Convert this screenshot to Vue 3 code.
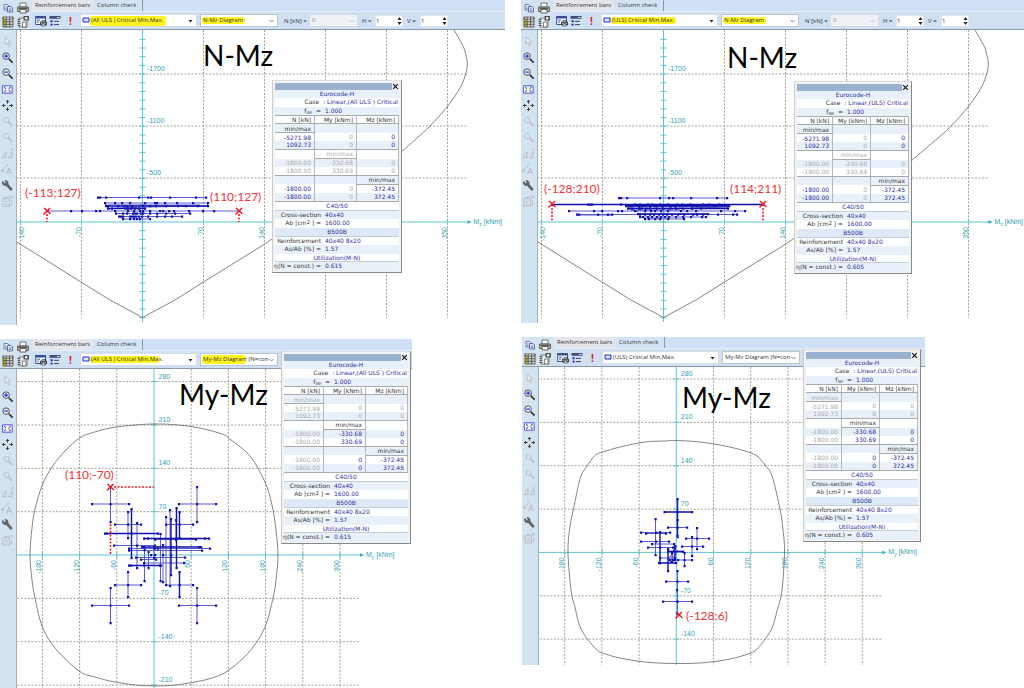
<script setup>
import { reactive } from 'vue'

const railIcons = [
  { id: 'cursor', label: 'Select', dim: true },
  { id: 'zoomin', label: 'Zoom in' },
  { id: 'zoomout', label: 'Zoom out' },
  { id: 'fit', label: 'Fit view' },
  { id: 'pan', label: 'Pan' },
  { id: 'undo', label: 'Previous view', dim: true },
  { id: 'redo', label: 'Next view', dim: true },
  { id: 'mirror', label: 'Mirror', dim: true },
  { id: 'label', label: 'Label', dim: true },
  { id: 'wrench', label: 'Settings' },
  { id: 'export', label: 'Export', dim: true },
]

const range = (from, step, n) => Array.from({ length: n }, (_, i) => Math.round((from + i * step) * 10) / 10)

const nmGrid = (x0) => ({
  x: x0, y: 222,
  gx: range(x0 - 122, 61, 8), gy: [74, 126, 178],
  gridRight: x0 + 325, gridBottom: 318, axisBottom: 322,
  yTicks: range(39.3, 8.7, 33).filter((v) => v < 320),
  yLabels: [[-1700, 74], [-1100, 126], [-500, 178]],
  xLabels: [-140, -70, null, 70, 140, 210, 280, 350],
  unit: 'z',
})

const mmGrid = (x0, y0, bottom) => ({
  x: x0, y: y0,
  gx: range(x0 - 111.6, 37.2, 9), gy: range(y0 - 173.4, 43.35, 8).filter((v) => v !== y0 && v < bottom),
  gridRight: x0 + 206, gridBottom: bottom, axisBottom: bottom,
  yTicks: range(y0 - 173.4, 43.35, 8).filter((v) => v < bottom),
  yLabels: [280, 210, 140, 70, null, -70, -140, -210].map((t, i) => [t, y0 - 173.4 + i * 43.35]).filter((l) => l[0] !== null && l[1] < bottom),
  xLabels: [-180, -120, -60, null, 60, 120, 180, 240, 300],
  unit: 'y',
})

const panels = reactive([
  {
    id: 'a', side: 'left', kind: 'N-Mz', caseName: '(All ULS ) Critical Min,Max.', short: 'Linear,(All ULS ) Critical',
    diagram: 'N-Mz Diagram', eta: '0.615', view: '17 30 488 295', grid: nmGrid(142.5),
    title: [203, 66], notes: [['(-113;127)', 25, 197], ['(110;127)', 210, 201]],
    straight: ['M17 242L81 282L110 300L142.5 317.5L175 300L203.5 282L260 247L290 227'],
    smooth: [[454, 30], [463.5, 47], [466, 56], [467.3, 63], [466, 73], [460, 88], [447, 107], [430, 126], [417, 138], [401, 152], [380, 169]],
    marks: [[47, 211], [239, 211]], dashes: ['M47 214V222', 'M239 214V222'],
    h: [[98, 197.5, 206], [105, 203, 208], [106, 206, 208, 1], [108, 208.5, 145, 1], [47, 211, 239], [116, 213.5, 190], [119, 216.5, 182], [123, 219, 150]],
    v: [],
    shape: 'M105 203L108 208.5L145 207L207 206L208 203M108 205H200M119 216L123 219',
    dots: [[197.5, [100, 106, 139, 148, 151, 170, 196]], [203, [115, 122, 130, 145, 155, 157, 165, 177, 193]], [206, [108, 118, 124, 127, 132, 143, 150, 156, 166, 178, 186, 198]], [208.5, [112, 126, 128, 131, 135, 139]], [211, [71, 82, 96, 100, 115, 128, 134, 140, 143, 150, 160, 163, 169, 174, 189, 203, 214]], [213.5, [123, 127, 133, 135, 137, 141, 143, 150, 157, 166, 175]], [216.5, [121, 123, 130, 132, 134, 136, 139, 142, 148, 157, 165, 172]], [219, [130, 134, 137, 140]]],
    marker: 'a',
  },
  {
    id: 'c', side: 'left', kind: 'My-Mz', caseName: '(All ULS ) Critical Min,Max.', short: 'Linear,(All ULS ) Critical',
    diagram: 'My-Mz Diagram (N=con', eta: '0.615', view: '17 369 395 319', grid: mmGrid(154, 555, 690),
    title: [179, 405], notes: [['(110;-70)', 65, 479]],
    straight: [], closed: true,
    smooth: [[30, 555], [32, 528], [35, 509], [42.3, 485], [52, 467], [65, 451], [79.5, 438], [90, 433.5], [110, 428], [135, 425], [154, 424], [172, 424.5], [197, 427.5], [222, 434], [231, 440], [250, 456], [265, 482], [272, 505], [276, 530], [278, 555], [276, 580], [273, 598], [265, 627], [250, 651], [229, 670], [215, 677], [195, 682], [170, 685.5], [142, 685.5], [115, 682], [95, 677], [79, 671], [55, 648], [42, 626], [35, 598], [32, 580]],
    marks: [[110.5, 487]], dashes: ['M114 487H154', 'M110.5 524V555'],
    h: [[92, 504, 129], [179, 504, 216], [115, 524.5, 141], [166, 524.5, 193], [105, 533.5, 158, 1], [144, 538.5, 209, 1], [155, 539.5, 196], [114, 545.5, 155], [142, 547, 201, 1], [155, 548.5, 210], [129, 548.5, 158], [129, 550.5, 202], [136, 557.5, 185], [141, 559.5, 156], [144, 563, 184], [129, 565.5, 161, 1], [115, 585, 141], [166, 585, 193], [92, 605.5, 129], [179, 605.5, 216]],
    v: [[110.5, 487, 522], [197, 487, 522], [128, 512, 538], [179.5, 512, 538, 1], [131.5, 509, 558, 1], [137, 523, 568], [144.5, 550, 581], [148.5, 552, 568], [154, 548, 558], [160.5, 534, 581], [163, 545, 582], [166, 517, 585], [170, 510, 586], [171, 519, 575, 1], [176.5, 508, 568, 1], [176, 520, 540], [128, 572, 597], [179.5, 572, 597, 1], [110.5, 588, 623], [197, 588, 623]],
    shape: '',
    dots: [[504, [110.5, 197]], [524.5, [128, 179.5]], [533.5, [107, 131.5]], [538.5, [148, 176, 205]], [545.5, [137]], [547, [144, 171, 199]], [555, [151, 155, 163, 171]], [565.5, [131, 144, 160]], [585, [128, 179.5]], [605.5, [110.5, 197]]],
    marker: 'c',
  },
  {
    id: 'b', side: 'right', kind: 'N-Mz', caseName: '(ULS) Critical Min,Max.', short: 'Linear,(ULS) Critical',
    diagram: 'N-Mz Diagram', eta: '0.605', view: '538 30 486 293', grid: nmGrid(663.5),
    title: [727, 68], notes: [['(-128;210)', 544, 193], ['(114;211)', 730, 193]],
    straight: ['M538 242L602 282L631 300L663.5 317.5L696 300L724.5 282L781 247L811 227'],
    smooth: [[975, 30], [984.5, 47], [987, 56], [988.3, 63], [987, 73], [981, 88], [968, 107], [951, 126], [938, 138], [911, 161], [900, 170]],
    marks: [[552, 204], [763, 204]], dashes: ['M552 208V222', 'M763 208V222'],
    h: [[619, 198, 727], [552, 204.5, 763, 1], [626, 206, 729, 1], [628, 208.5, 728, 1], [569, 211, 745], [577, 214.5, 737], [638, 214, 708, 1], [640, 217, 706], [645, 219, 684]],
    v: [],
    shape: 'M626 204L629 208.5L638 212M729 204L727 208L690 207M578 215H612M629 206.8H727M631 210L680 210',
    dots: [[198, [621, 627, 660, 669, 673, 691, 717]], [204.5, [588, 590, 592, 621, 635, 640, 648, 652, 660, 668, 677, 682, 690, 703, 709, 719]], [206, [630, 639, 643, 650, 655, 662, 671, 675, 680, 686, 697, 715]], [208.5, [632, 639, 641, 646, 650, 657, 663, 670, 676, 683, 692, 701]], [211, [594, 602, 618, 622, 635, 645, 651, 655, 661, 668, 681, 687, 696, 721, 735]], [214.5, [579, 598, 608, 612, 640, 645, 650, 654, 659, 663, 667, 672, 678, 684, 693, 697, 703, 718, 733]], [217, [643, 648, 652, 657, 661, 665, 669, 676, 683, 691, 702]], [219, [649, 655, 660, 668]]],
    marker: 'b',
  },
  {
    id: 'd', side: 'right', kind: 'My-Mz', caseName: '(ULS) Critical Min,Max.', short: 'Linear,(ULS) Critical',
    diagram: 'My-Mz Diagram (N=con', eta: '0.605', view: '539 367 386 298', grid: mmGrid(676.3, 552.4, 665),
    title: [682, 408], notes: [['(-128;6)', 686, 620]],
    straight: [], closed: true,
    smooth: [[568, 552], [570, 526], [573.5, 509], [577, 492], [581, 476], [587, 466], [595, 455.5], [603, 452], [620, 447], [645, 442], [665, 441], [676, 440.5], [700, 442], [725, 446], [745, 451], [757, 456], [765, 465], [772, 476], [780, 509], [783, 530], [784.5, 552], [782, 590], [777, 611], [771, 630], [757, 649], [745, 655], [725, 660], [700, 663], [676, 663.5], [650, 662.5], [625, 659], [607, 654.5], [596, 649], [581, 629], [575, 607], [571, 590]],
    marks: [[679, 615]], dashes: [],
    h: [[664.5, 512, 692, 1], [668, 527.5, 687], [641, 532.5, 670], [646, 533.5, 666], [641, 541.5, 669], [652, 544, 674], [648, 547.5, 673], [686, 538.5, 709], [682, 546.5, 703], [668, 551.5, 683, 1], [678, 560, 692], [660, 558, 675], [659, 563, 676, 1], [666, 581.5, 688], [663, 601.5, 692]],
    v: [[677.5, 499, 536, 1], [655.5, 519, 555], [660, 532, 563, 1], [697, 528, 549], [692, 537, 556], [684.5, 553, 566], [668, 549, 571, 1], [672, 553, 562], [675, 546, 560, 1], [677.5, 571, 614], [677.5, 520, 537]],
    shape: 'M668 560L677 546M670 562L678 550M672 557L674 548',
    dots: [[512, [677.5]], [527.5, [677.5]], [532.5, [656]], [541.5, [656]], [547.5, [660]], [538.5, [697]], [546.5, [692]], [560, [684.5, 670, 673]], [581.5, [677.5]], [590, [677]], [601.5, [677.5]]],
    marker: '',
  },
])

const columns = [panels.filter((p) => p.side === 'left'), panels.filter((p) => p.side === 'right')]

// Catmull-Rom spline through the envelope points.
const spline = (pts, closed) => {
  const n = pts.length
  const at = (i) => (closed ? pts[(i + n) % n] : pts[Math.min(Math.max(i, 0), n - 1)])
  let d = `M${pts[0]}`
  for (let i = 0; i < (closed ? n : n - 1); i++) {
    const [a, b, c, e] = [at(i - 1), at(i), at(i + 1), at(i + 2)]
    d += `C${b[0] + (c[0] - a[0]) / 6} ${b[1] + (c[1] - a[1]) / 6} ${c[0] - (e[0] - b[0]) / 6} ${c[1] - (e[1] - b[1]) / 6} ${c[0]} ${c[1]}`
  }
  return d
}

const square = (x, y) => `M${x - 1} ${y - 1}h2.2v2.2h-2.2z`
const dotPath = (p) =>
  p.h.map((l) => square(l[0], l[1]) + square(l[2], l[1])).join('') +
  p.v.map((l) => square(l[0], l[1]) + square(l[0], l[2])).join('') +
  p.dots.map(([y, xs]) => xs.map((x) => square(x, y)).join('')).join('')
const linePath = (p, thick) =>
  p.h.filter((l) => !!l[3] === thick).map((l) => `M${l[0]} ${l[1]}H${l[2]}`).join('') +
  p.v.filter((l) => !!l[3] === thick).map((l) => `M${l[0]} ${l[1]}V${l[2]}`).join('')
const gridPath = (g, top) =>
  g.gx.filter((x) => Math.abs(x - g.x) > 1).map((x) => `M${x} ${top}V${g.gridBottom}`).join('') +
  g.gy.map((y) => `M${g.x - 140} ${y}H${g.gridRight}`).join('')
const tickPath = (g) =>
  g.yTicks.map((y) => `M${g.x - 3} ${y}h6`).join('') + g.gx.map((x) => `M${x} ${g.y - 3}v6`).join('')
const leftOf = (p) => Number(p.view.split(' ')[0])
const topOf = (p) => Number(p.view.split(' ')[1])

// Each row: [N, My, Mz] with a flag per cell telling whether it is greyed out.
const resultRows = (kind) => {
  const n = kind === 'N-Mz'
  return [
    { head: 0, cells: [['min/max', !n], ['', 0], ['', 0]] },
    { cells: [['-5271.98', !n], ['0', 1], ['0', !n]] },
    { end: true, cells: [['1092.73', !n], ['0', 1], ['0', !n]] },
    { head: 1, cells: [['', 0], ['min/max', n], ['', 0]] },
    { cells: [['-1800.00', 1], ['-330.68', n], ['0', n]] },
    { end: true, cells: [['-1800.00', 1], ['330.69', n], ['0', n]] },
    { head: 2, cells: [['', 0], ['', 0], ['min/max', 0]] },
    { cells: [['-1800.00', !n], ['0', n], ['-372.45', 0]] },
    { end: true, cells: [['-1800.00', !n], ['0', n], ['372.45', 0]] },
  ]
}
</script>

<template>
  <main class="board">
    <div v-for="(col, ci) in columns" :key="ci" class="column">
      <section v-for="p in col" :key="p.id" class="panel" :class="'panel-' + p.id">
        <header class="head">
          <div class="file-tools">
            <button class="tool" aria-label="Copy">
              <svg viewBox="0 0 12 12"><path d="M2 2.500h3.500l1.500 1.500v4h-5z" fill="#eef" stroke="#5568a0" stroke-width=".8" /><path d="M5.500 4.500h3.500l1.500 1.500v4h-5z" fill="#dde4fa" stroke="#445590" stroke-width=".8" /><path d="M7 7h2M7 8.500h2M3 5h1.500M3 6.500h1.500" stroke="#445590" stroke-width=".7" /></svg>
            </button>
            <button class="tool" aria-label="Print">
              <svg viewBox="0 0 12 12"><path d="M3 1h6v4H3z" fill="#fff" stroke="#555" stroke-width=".8" /><path d="M.6 5h10.800v4.500H.6z" fill="#b9b7a0" stroke="#444" stroke-width=".8" /><path d="M3 7.500h6V11H3z" fill="#f7f7f0" stroke="#444" stroke-width=".8" /><path d="M1.500 6.300h9" stroke="#444" /></svg>
            </button>
            <button class="tool" aria-label="Table">
              <svg viewBox="0 0 12 12"><path d="M1 1h10v10H1z" fill="#fff" /><path d="M1 3h3v8H1z" fill="#e8e22c" /><path d="M1 1h10v2H1zM1 1v10h10V1M1 5.700h10M1 8.300h10M4.200 1v10M7.600 1v10" fill="#333" fill-opacity=".2" stroke="#444" stroke-width=".8" /></svg>
            </button>
            <button class="tool" aria-label="Snapshot">
              <svg viewBox="0 0 12 12"><path d="M2 2h8v9H2z" fill="#e8ecf0" stroke="#666" stroke-width=".8" /><path d="M.5 3.500h3M.5 5.500h3M.5 7.500h3M.5 9.500h3" stroke="#444" stroke-width=".8" /><path d="M6.500 0h5.500v4.500h-5.500z" fill="#555" /><circle cx="9.200" cy="2.300" r="1.200" fill="#fff" /><path d="M5.500 6h3.500v5h-3.500z" fill="#fff" stroke="#666" stroke-width=".8" /></svg>
            </button>
          </div>
          <div class="ribbon">
            <nav class="tabs">
              <button class="tab">Reinforcement bars</button>
              <button class="tab current">Column check</button>
            </nav>
            <div class="toolbar">
              <button class="tool" aria-label="Print table">
                <svg viewBox="0 0 12 12"><path d="M.7 1.500h9.800v8H.7z" fill="#f6f8ff" stroke="#2c3f86" stroke-width=".9" /><path d="M.5 1h10.200v2.500H.5z" fill="#3a4f96" /><path d="M2 5.200h3M2 7.200h2" stroke="#2c3f86" stroke-width=".8" /><path d="M5.500 7h6v3h-6z" fill="#999" stroke="#222" stroke-width=".8" /><path d="M7 5.500h3V7H7zM7 9h3v2H7z" fill="#fff" stroke="#222" stroke-width=".6" /></svg>
              </button>
              <button class="tool" aria-label="Display options">
                <svg viewBox="0 0 12 12"><path d="M.5 1h11v2.800H.5z" fill="#444e78" /><path d="M8 2.500h2.500" stroke="#fff" stroke-width=".8" /><path d="M1.500 5.300h2.200v1.900H1.500zM1.500 8.700h2.200v1.900H1.500z" fill="#2525cc" /><path d="M5 6.300h5M5 9.600h5" stroke="#444" /></svg>
              </button>
              <button class="alert" aria-label="Warnings">!</button>
              <div class="pick pick-case">
                <span v-if="p.marker" class="marker" :class="'marker-' + p.marker"></span>
                <svg class="case-icon" viewBox="0 0 8 6"><path d="M1 1h6v4H1z" fill="#dfe4ff" stroke="#1c28d8" stroke-width="1" /></svg>
                <select aria-label="Load case"><option>{{ p.caseName }}</option></select>
                <svg class="arrow" viewBox="0 0 5 4"><path d="M.5 1h4L2.500 3.500z" fill="#222" /></svg>
              </div>
              <div class="pick pick-diagram">
                <span v-if="p.marker" class="marker" :class="'marker-dia-' + p.marker"></span>
                <select aria-label="Diagram"><option>{{ p.diagram }}</option></select>
                <svg class="arrow" viewBox="0 0 5 4"><path d="M.5 1L2.500 3L4.500 1" fill="none" stroke="#666" stroke-width=".8" /></svg>
              </div>
              <template v-if="p.kind === 'N-Mz'">
                <label class="field label-n" :for="'n-' + p.id">N [kN] =</label>
                <div class="pick pick-n">
                  <select :id="'n-' + p.id" disabled><option>0</option></select>
                  <svg class="arrow" viewBox="0 0 5 4"><path d="M.5 1L2.500 3L4.500 1" fill="none" stroke="#bbb" stroke-width=".8" /></svg>
                </div>
                <template v-for="k in ['H', 'V']" :key="k">
                  <label class="field" :for="k + p.id">{{ k }} =</label>
                  <div class="spin">
                    <input :id="k + p.id" type="number" value="1" />
                    <svg viewBox="0 0 5 10"><path d="M.5 4h4L2.500 1zM.5 6h4L2.500 9z" fill="#222" /></svg>
                  </div>
                </template>
              </template>
            </div>
          </div>
        </header>

        <div class="body">
          <aside class="rail">
            <button v-for="ic in railIcons" :key="ic.id" class="rail-btn" :class="{ dim: ic.dim }" :aria-label="ic.label">
              <svg viewBox="0 0 14 14" fill="none" stroke="currentColor">
                <path v-if="ic.id === 'cursor'" d="M4.500 2v8l2-1.700 1.500 3.400 1.400-.7-1.500-3.200H10z" fill="#e8eef4" stroke-width=".9" />
                <template v-else-if="ic.id === 'zoomin' || ic.id === 'zoomout'">
                  <circle cx="5.500" cy="5.500" r="3.500" stroke-width=".9" fill="#eaf0ff" />
                  <path d="M8.500 8.500L12.500 12.500" stroke-width="1.800" />
                  <path :d="ic.id === 'zoomin' ? 'M3.500 5.500h4M5.500 3.500v4' : 'M3.500 5.500h4'" stroke="#2222dd" stroke-width="1.200" />
                </template>
                <template v-else-if="ic.id === 'fit'">
                  <path d="M1.500 3h10.500v8h-10.500z" stroke="#4650e8" stroke-width="1" fill="#f4f6ff" />
                  <path d="M3.500 5l2 1.500M3.500 9l2-1.500M10 5l-2 1.500M10 9l-2-1.500M3.300 4.600h1.500M8.800 4.600h1.500M3.300 9.500h1.500M8.800 9.500h1.500" stroke-width=".8" />
                </template>
                <path v-else-if="ic.id === 'pan'" d="M7 1.500v3.500M7 9v3.500M1.500 7H5M9 7h3.500M5.500 3.200L7 1.500l1.500 1.700M5.500 10.800L7 12.500l1.500-1.700M3.200 5.500L1.500 7l1.700 1.500M10.800 5.500L12.500 7l-1.700 1.500" stroke-width="1" />
                <template v-else-if="ic.id === 'undo' || ic.id === 'redo'">
                  <circle cx="6" cy="5.500" r="2.800" stroke-width=".9" />
                  <path d="M8.300 7.800L12 11.500" stroke-width="1.500" />
                  <path v-if="ic.id === 'redo'" d="M8 4h3" stroke="#d3e3ef" stroke-width="1.500" />
                </template>
                <path v-else-if="ic.id === 'mirror'" d="M1.500 11.500h4V5zM8 11.500h4V5zM11 3.500l1.500-1.500M12.500 1v2.500" stroke-width=".9" />
                <path v-else-if="ic.id === 'label'" d="M1 8.500L8 1M1 6.500v2.500h2.500M6 12L8.700 5.500L11.500 12M7 10h3.500" stroke-width="1" />
                <path v-else-if="ic.id === 'wrench'" d="M2 2.500a3 3 0 0 0 3.500 4.500L10.500 12.500l1.700-1.500L7.500 5.500A3 3 0 0 0 4.500 1.500l1 2.500-1.500 1z" fill="#666" stroke="#444" stroke-width=".6" />
                <path v-else d="M2 4h7v8H2zM4.500 4V2.500h4M11.500 6v4.500H9M4 7h3M4 9.500h3M9 4.500l3-3M10 1.500h2v2" stroke-width=".9" />
              </svg>
            </button>
          </aside>
          <svg class="plot" :viewBox="p.view">
            <path :d="gridPath(p.grid, topOf(p))" class="grid" />
            <path :d="`M${p.grid.x} ${topOf(p)}V${p.grid.axisBottom}M${p.grid.x - 140} ${p.grid.y}H${p.grid.gridRight + 3}`" class="axis" />
            <path :d="`M${p.grid.gridRight + 4} ${p.grid.y}l-4 -2v4z`" class="tip" />
            <path :d="tickPath(p.grid)" class="axis" />
            <text v-for="l in p.grid.yLabels" :key="'y' + l[0]" :x="p.grid.x + 4.500" :y="l[1] - 3" class="num">{{ l[0] }}</text>
            <template v-for="(l, i) in p.grid.xLabels" :key="'x' + i">
              <text v-if="l !== null" :transform="`translate(${Math.max(p.grid.gx[i] - 1, leftOf(p) + 7)} ${p.grid.y + 5}) rotate(-90)`" class="num turned">{{ l }}</text>
            </template>
            <text :x="p.grid.gridRight + 6" :y="p.grid.y + 2" class="num">M<tspan dy="2" class="sub">{{ p.grid.unit }}</tspan><tspan dy="-2"> [kNm]</tspan></text>
            <path v-for="(c, i) in p.straight" :key="'c' + i" :d="c" class="hull" />
            <path :d="spline(p.smooth, p.closed)" class="hull" />
            <path :d="linePath(p, false) + p.shape" class="line" />
            <path :d="linePath(p, true)" class="line thick" />
            <path :d="dotPath(p)" class="dots" />
            <path v-for="d in p.dashes" :key="d" :d="d" class="dash" />
            <path v-for="(m, i) in p.marks" :key="'m' + i" :d="`M${m[0] - 3} ${m[1] - 3}l6.500 6M${m[0] + 3} ${m[1] - 3}l-6.500 6.500`" class="cross" />
            <text v-for="n in p.notes" :key="n[0]" :x="n[1]" :y="n[2]" class="note">{{ n[0] }}</text>
            <text :x="p.title[0]" :y="p.title[1]" class="title">{{ p.kind }}</text>
          </svg>
        </div>

        <article class="results" :class="'results-' + p.id">
          <div class="caption"><button class="close" aria-label="Close"><svg viewBox="0 0 6 6"><path d="M1 1l4 4M5 1L1 5" stroke="#111" stroke-width="1" /></svg></button></div>
          <div class="info first">
            <div class="line-row mid">Eurocode-H</div>
            <div class="line-row case"><span>Case</span><span class="val">: {{ p.short }}</span></div>
            <div class="line-row"><span class="key">f<sub>se</sub>&nbsp; =</span><span class="val">1.000</span></div>
          </div>
          <table class="values">
            <thead><tr><th>N [kN]</th><th>My [kNm]</th><th>Mz [kNm]</th></tr></thead>
            <tbody>
              <tr v-for="(r, ri) in resultRows(p.kind)" :key="ri" :class="{ end: r.end }">
                <td v-for="(c, i) in r.cells" :key="i" :class="{ faint: c[1], caps: r.head === i }">{{ c[0] }}</td>
              </tr>
            </tbody>
          </table>
          <div class="info second">
            <div class="line-row mid">C40/50</div>
            <div class="line-row"><span class="key">Cross-section</span><span class="val">40x40</span></div>
            <div class="line-row"><span class="key">Ab [cm<sup>2</sup> ] =</span><span class="val">1600.00</span></div>
            <div class="line-row mid">B500B</div>
            <div class="line-row"><span class="key">Reinforcement</span><span class="val">40x40 8x20</span></div>
            <div class="line-row"><span class="key">As/Ab [%] =</span><span class="val">1.57</span></div>
            <div class="line-row mid">Utilization(M-N)</div>
            <div class="line-row"><span class="key">η(N = const.) =</span><span class="val">{{ p.eta }}</span></div>
          </div>
        </article>
      </section>
    </div>
  </main>
</template>

<style>
html, body { background: #fff; overflow: hidden; }
</style>

<style scoped>
.board { display: grid; grid-template-columns: 521fr 503fr; font-family: "Open Sans", "Noto Sans", sans-serif; font-size: 6px; color: #333; }
.board * { box-sizing: border-box; }
.column { display: flex; flex-direction: column; gap: 14px; min-width: 0; }
.panel { position: relative; }
.panel-a { margin-right: 16px; }
.panel-c { margin-right: 109px; }
.panel-d { margin-left: 1px; margin-right: 99px; }
button, select, input { font: inherit; color: inherit; border: 0; padding: 0; margin: 0; background: none; }
svg { display: block; }

.head { display: flex; height: 30px; overflow: hidden; background: #cfe0f6; border-bottom: 1px solid #8b98a8; }
.file-tools { flex: none; width: 32px; padding: 2px 2px 0; display: grid; grid-template-columns: 12px 12px; gap: 2px 3px; align-content: start; background: #d3e3ef; }
.tool { width: 12px; height: 12px; flex: none; }
.ribbon { flex: 1; min-width: 0; }
.tabs { display: flex; height: 12px; border-bottom: 1px solid #e6eefa; }
.tab { height: 11px; padding: 0 3px; line-height: 11px; white-space: nowrap; background: #e4e6ec; width: 61px; text-align: left; }
.tab.current { width: 50px; padding-left: 4px; background: #d3e3f3; border-right: 1px solid #8b98a8; }
.toolbar { display: flex; align-items: center; height: 17px; padding-left: 3px; background: #d0e0f3; }
.toolbar > * { flex: none; }
.toolbar .tool + .tool { margin-left: 2px; }
.alert { width: 19px; height: 12px; color: #e01818; font-size: 10px; font-weight: 700; line-height: 12px; }
.pick { position: relative; height: 13px; background: #fff; border: 1px solid #d8dde4; }
.pick select { position: relative; appearance: none; width: 100%; height: 11px; line-height: 11px; display: block; opacity: 1; }
.pick-case { width: 117px; }
.pick-case select { padding-left: 10px; }
.pick-diagram { width: 78px; margin-left: 3px; border-color: #bcc5d0; }
.pick-diagram select { padding-left: 2px; }
.pick-n { width: 49px; background: #eef2f6; color: #888; }
.pick-n select { padding-left: 2px; }
.case-icon { position: absolute; left: 1px; top: 2px; width: 8px; height: 6px; }
.arrow { position: absolute; right: 3px; top: 4px; width: 5px; height: 4px; }
.marker { position: absolute; background: #fff21e; border-radius: 3px; }
.marker-a { left: 9px; right: 30px; top: 1px; height: 10px; }
.marker-c { left: 9px; right: 37px; top: 2px; height: 7px; }
.marker-b { left: 9px; right: 41px; top: 2px; height: 7px; }
.marker-dia-a, .marker-dia-b { left: 1px; right: 32px; top: 2px; height: 7px; }
.marker-dia-c { left: 1px; right: 31px; top: 1px; height: 9px; }
.field { width: 17px; padding-left: 4px; white-space: nowrap; }
.label-n { width: 31px; padding-left: 6px; }
.spin { display: flex; align-items: center; width: 28px; height: 12px; background: #fff; border: 1px solid #e4e8ee; }
.spin input { appearance: textfield; width: 21px; height: 10px; }
.spin svg { width: 5px; height: 10px; }

.body { display: flex; }
.rail { flex: none; width: 17px; padding-top: 3px; background: #d3e3ef; border-right: 1px solid #9fb0c2; }
.rail-btn { display: block; width: 14px; height: 16px; margin-left: 1px; color: #333; }
.rail-btn svg { width: 13px; height: 13px; }
.rail-btn.dim { color: #b2b9c0; }
.plot { flex: 1; min-width: 0; height: auto; overflow: hidden; background: #fff; }
.grid { fill: none; stroke: #a5a395; stroke-width: 1; stroke-dasharray: 2 1.500; }
.axis { fill: none; stroke: #5fc3d2; stroke-width: 1; }
.tip { fill: #3fb4c6; }
.num { font: 7px "Liberation Sans", Arial, sans-serif; fill: #2fa3b5; }
.num .sub { font-size: 5px; }
.turned { text-anchor: end; }
.hull { fill: none; stroke: #666; stroke-width: .8; }
.line { fill: none; stroke: #4a4ac4; stroke-width: .9; }
.thick { stroke: #1010ac; stroke-width: 1.400; }
.dots { fill: #1212b0; }
.dash { fill: none; stroke: #ee1c24; stroke-width: 1.600; stroke-dasharray: 2 1.500; }
.cross { fill: none; stroke: #ee1c24; stroke-width: 1.500; }
.note { font: 12px Lato, "Open Sans", sans-serif; fill: #ee3338; }
.title { font: 28px Lato, "Open Sans", sans-serif; fill: #000; }

.results { position: absolute; width: 130px; padding: 2px 2px 1px; background: #f2f2f2; border-right: 1px solid #888; border-bottom: 1px solid #888; border-top: 1px solid #ddd; border-left: 1px solid #ccc; font-family: "DejaVu Sans", Verdana, sans-serif; line-height: 8px; color: #333; }
.results-a { left: 272px; top: 80px; }
.results-b { left: 273px; top: 81px; width: 118px; }
.results-c { left: 281px; top: 12px; }
.results-d { left: 281px; top: 12px; width: 118px; }
.caption { height: 7px; background: #9ab2d0; display: flex; justify-content: flex-end; }
.close { width: 7px; height: 7px; background: #f0f0f0; }
.close svg { width: 7px; height: 7px; }
.info { display: grid; grid-auto-rows: 1fr; background: #fff; color: #333; }
.first { height: 25px; }
.second { height: 69px; }
.line-row { display: flex; gap: 4px; white-space: nowrap; min-height: 0; }
.line-row.case { justify-content: flex-end; padding-right: 1px; }
.line-row:nth-child(odd), .second .line-row:nth-child(even) { background: #e8f1fa; }
.second .line-row:nth-child(odd) { background: #fff; }
.second .line-row.mid:nth-child(4) { background: #dde9f6; }
.mid { justify-content: center; color: #3030a0; }
.second .mid { border-bottom: 1px solid #c4ccd4; }
.key { width: 46px; flex: none; display: flex; justify-content: flex-end; white-space: pre; }
.key sub, .key sup { font-size: 5px; line-height: 8px; }
.key sub { padding-top: 1px; }
.key sup { line-height: 6px; }
.val { color: #3030a0; }
.values { width: 100%; height: 87px; table-layout: fixed; border-collapse: collapse; background: #fff; border-top: 1px solid #aaa; }
.values th, .values td { padding: 0 3px 0 0; text-align: right; font-weight: 400; line-height: 7px; border-right: 1px solid #b4b8bc; color: #2a2a9c; white-space: nowrap; }
.values th { color: #333; border-bottom: 1px solid #aaa; }
.values th:first-child { width: 32%; }
.values tbody tr:nth-child(odd) { background: #e8f1fa; }
.values .end td { border-bottom: 1px solid #aaa; }
.values td.caps { color: #333; border-bottom: 1px solid #aaa; }
.values td.faint { color: #aaa; }
</style>
